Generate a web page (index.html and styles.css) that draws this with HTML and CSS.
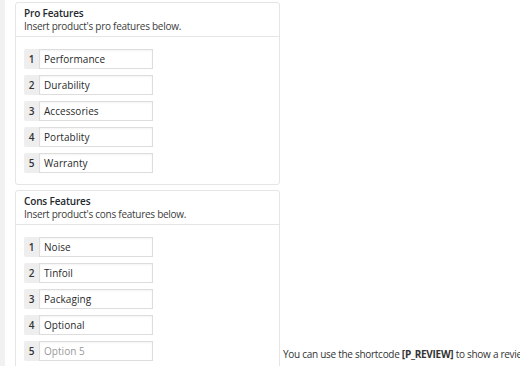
FILE: index.html
```html
<!DOCTYPE html>
<html>
<head>
<meta charset="utf-8">
<link rel="stylesheet" href="styles.css">
</head>
<body>
<div class="page">
  <div class="strip"></div>
  <div class="main">
    <div class="box">
      <div class="box-head">
        <div class="title">Pro Features</div>
        <div class="sub">Insert product's pro features below.</div>
      </div>
      <div class="box-body">
        <div class="row"><span class="num">1</span><span class="field">Performance</span></div>
        <div class="row"><span class="num">2</span><span class="field">Durability</span></div>
        <div class="row"><span class="num">3</span><span class="field">Accessories</span></div>
        <div class="row"><span class="num">4</span><span class="field">Portablity</span></div>
        <div class="row"><span class="num">5</span><span class="field">Warranty</span></div>
      </div>
    </div>
    <div class="box">
      <div class="box-head">
        <div class="title">Cons Features</div>
        <div class="sub">Insert product's cons features below.</div>
      </div>
      <div class="box-body">
        <div class="row"><span class="num">1</span><span class="field">Noise</span></div>
        <div class="row"><span class="num">2</span><span class="field">Tinfoil</span></div>
        <div class="row"><span class="num">3</span><span class="field">Packaging</span></div>
        <div class="row"><span class="num">4</span><span class="field">Optional</span></div>
        <div class="row"><span class="num">5</span><span class="field placeholder">Option 5</span></div>
      </div>
    </div>
  </div>
  <div class="note">You can use the shortcode <b>[P_REVIEW]</b> to show a revie</div>
</div>
</body>
</html>
```

FILE: styles.css
```css
html, body {
  margin: 0;
  padding: 0;
  background: #fff;
  overflow: hidden;
  height: 366px;
}
body {
  font-family: "Open Sans", "Liberation Sans", sans-serif;
  color: #333;
  font-size: 10px;
}
.page {
  display: flex;
  align-items: flex-start;
  width: 520px;
  height: 366px;
  overflow: hidden;
}
.strip {
  width: 5px;
  align-self: stretch;
  background: #f1f1f1;
  flex: none;
}
.main {
  flex: none;
  width: 265px;
  margin-left: 10px;
  padding-top: 2px;
  display: flex;
  flex-direction: column;
  gap: 5px;
}
.box {
  border: 1px solid #e5e5e5;
  border-radius: 3px;
  background: #fff;
}
.box-head {
  padding: 4px 8px 0 8px;
  height: 29px;
  border-bottom: 1px solid #e5e5e5;
  line-height: 13px;
}
.title {
  font-weight: 600;
  font-size: 10px;
  letter-spacing: -0.15px;
  color: #23282d;
}
.sub {
  color: #3c3c3c;
  letter-spacing: -0.27px;
}
.box-body {
  padding: 12px 8px 11px 8px;
  display: flex;
  flex-direction: column;
  gap: 6px;
}
.row {
  display: flex;
  height: 20px;
}
.num {
  width: 15px;
  background: #eee;
  border-radius: 2px 0 0 2px;
  display: flex;
  align-items: center;
  justify-content: center;
  font-weight: 600;
  font-size: 10px;
  color: #333;
}
.field {
  border: 1px solid #ddd;
  box-shadow: inset 0 1px 2px rgba(0,0,0,0.05);
  background: #fff;
  display: flex;
  align-items: center;
  padding-left: 4px;
  box-sizing: border-box;
  width: 114px;
  color: #2a2a2a;
  font-size: 10px;
  letter-spacing: 0.05px;
}
.placeholder {
  color: #999;
}
.note {
  flex: none;
  margin-top: 347px;
  margin-left: 3px;
  white-space: nowrap;
  color: #333;
  letter-spacing: -0.28px;
}
.note b {
  font-weight: 700;
}
```
